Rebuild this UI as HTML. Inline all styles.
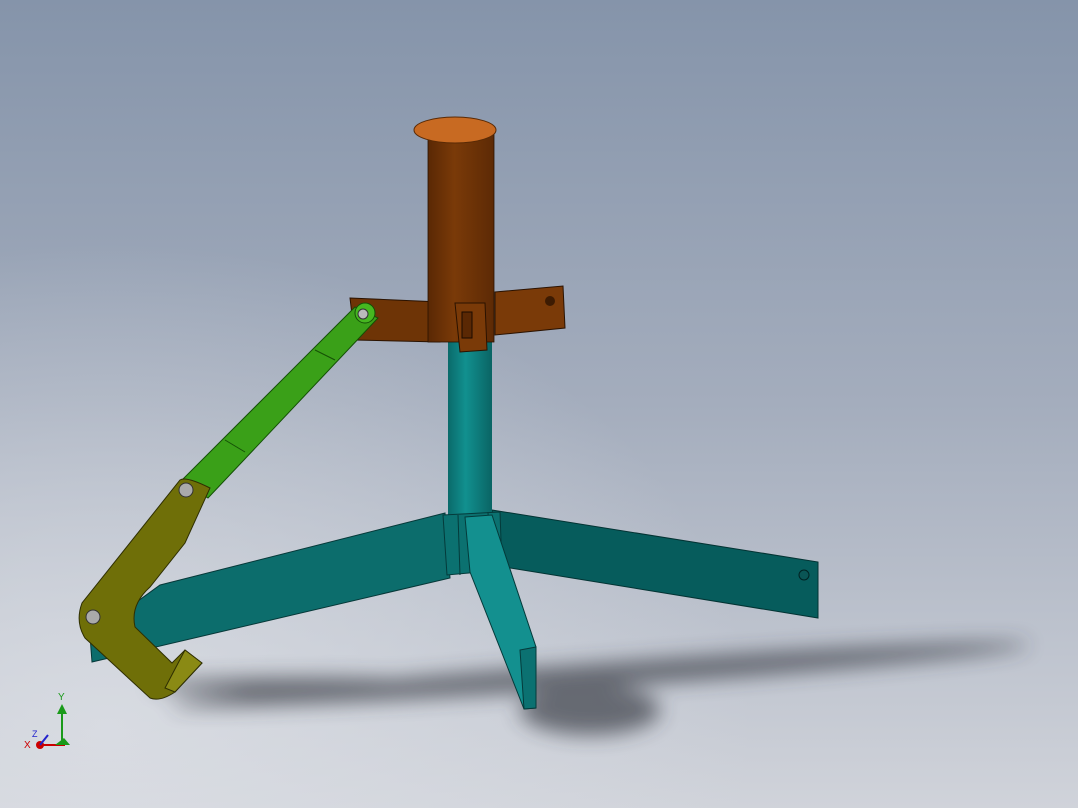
<!DOCTYPE html>
<html><head><meta charset="utf-8"><style>
html,body{margin:0;padding:0;width:1078px;height:808px;overflow:hidden}
</style></head><body>
<svg width="1078" height="808" viewBox="0 0 1078 808" xmlns="http://www.w3.org/2000/svg">
<defs>
<linearGradient id="bg" x1="0" y1="0" x2="0" y2="1">
<stop offset="0" stop-color="#8594aa"/><stop offset="0.5" stop-color="#a4adbd"/><stop offset="1" stop-color="#d0d3da"/>
</linearGradient>
<radialGradient id="glow" cx="0.1" cy="0.9" r="0.6"><stop offset="0" stop-color="#dcdfe5" stop-opacity="0.8"/><stop offset="1" stop-color="#dcdfe5" stop-opacity="0"/></radialGradient>
<linearGradient id="cyl" x1="0" x2="1"><stop offset="0" stop-color="#5a2804"/><stop offset="0.4" stop-color="#7a3a08"/><stop offset="1" stop-color="#5d2a05"/></linearGradient>
<linearGradient id="col" x1="0" x2="1"><stop offset="0" stop-color="#0a6a6a"/><stop offset="0.4" stop-color="#11908f"/><stop offset="1" stop-color="#0a6464"/></linearGradient>
<filter id="bl" x="-50%" y="-50%" width="200%" height="200%"><feGaussianBlur stdDeviation="10"/></filter>
</defs>
<rect width="1078" height="808" fill="url(#bg)"/>
<rect width="1078" height="808" fill="url(#glow)"/>
<g filter="url(#bl)" fill="#30343c" opacity="0.65">
<ellipse cx="600" cy="675" rx="430" ry="12" transform="rotate(-4 600 675)"/>
<ellipse cx="590" cy="710" rx="70" ry="25"/>
<ellipse cx="300" cy="685" rx="150" ry="8"/>
</g>
<polygon points="160,585 445,513 450,578 92,662 90,636" fill="#0c6d6c" stroke="#063838" stroke-width="1"/>
<polygon points="492,510 818,562 818,618 498,566" fill="#065c5c" stroke="#033333" stroke-width="1"/>
<rect x="448" y="335" width="44" height="180" fill="url(#col)"/>
<polygon points="443,515 500,512 502,570 447,575" fill="#0b7170" stroke="#043a3a"/>
<line x1="458" y1="515" x2="460" y2="575" stroke="#043a3a"/>
<line x1="488" y1="512" x2="490" y2="570" stroke="#043a3a"/>
<polygon points="465,517 492,515 536,647 536,708 524,709 470,572" fill="#13908f" stroke="#043a3a"/>
<polygon points="520,650 536,647 536,708 524,709" fill="#0b7171" stroke="#043a3a"/>
<circle cx="804" cy="575" r="5" fill="#0a5555" stroke="#022" />
<polygon points="350,298 440,302 440,342 355,340" fill="#6e3406" stroke="#2a1200"/>
<polygon points="495,292 563,286 565,328 495,335" fill="#7a3a08" stroke="#2a1200"/>
<circle cx="550" cy="301" r="5" fill="#3d1b02"/>
<rect x="428" y="132" width="66" height="210" fill="url(#cyl)" stroke="#2a1200" stroke-width="0.8"/>
<ellipse cx="455" cy="130" rx="41" ry="13" fill="#c86a22" stroke="#5a2a05"/>
<polygon points="455,303 485,303 487,350 460,352" fill="#7a3a08" stroke="#2a1200"/>
<rect x="462" y="312" width="10" height="26" fill="#5a2804" stroke="#1a0a00"/>
<polygon points="355,307 378,318 208,498 180,482" fill="#3aa018" stroke="#145006"/>
<line x1="315" y1="350" x2="335" y2="360" stroke="#145006"/>
<line x1="225" y1="440" x2="245" y2="452" stroke="#145006"/>
<circle cx="365" cy="313" r="10" fill="#46b820" stroke="#145006"/>
<circle cx="363" cy="314" r="5" fill="#bbb" stroke="#333"/>
<!-- hook -->
<path d="M180,480 Q186,476 210,488 L185,543 L150,587 Q130,605 135,627 L172,663 L185,650 L202,663 L175,692 Q160,702 150,698 L85,638 Q75,622 82,603 Z" fill="#6f6f08" stroke="#2e2e02"/>
<path d="M185,650 L202,663 L175,692 L165,688 Z" fill="#8a8a14" stroke="#2e2e02"/>
<circle cx="186" cy="490" r="7" fill="#aaa" stroke="#333"/>
<circle cx="93" cy="617" r="7" fill="#aaa" stroke="#333"/>
<g stroke-width="2">
<line x1="40" y1="745" x2="65" y2="745" stroke="#c00"/>
<line x1="62" y1="745" x2="62" y2="712" stroke="#1a9a1a"/>
<polygon points="57,714 62,704 67,714" fill="#1a9a1a"/>
<polygon points="55,745 64,738 70,745" fill="#1a9a1a"/>
<circle cx="40" cy="745" r="4" fill="#c00"/>
<line x1="40" y1="745" x2="48" y2="735" stroke="#22c"/>
</g>
<text x="58" y="700" font-family="Liberation Sans, sans-serif" font-size="10" fill="#1a9a1a">Y</text>
<text x="24" y="748" font-family="Liberation Sans, sans-serif" font-size="10" fill="#c00">X</text>
<text x="32" y="737" font-family="Liberation Sans, sans-serif" font-size="9" fill="#22c">Z</text>
</svg>
</body></html>
